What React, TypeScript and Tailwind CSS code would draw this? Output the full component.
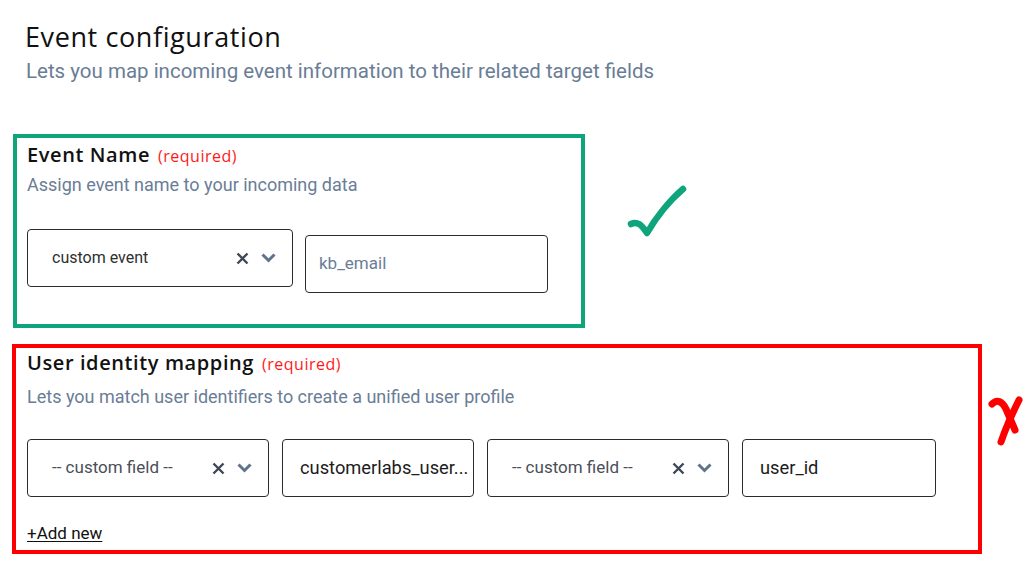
import React from "react";

function XIcon() {
  return (
    <svg width="13" height="13" viewBox="0 0 13 13" fill="none">
      <path d="M1.5 1.5 L11.5 11.5 M11.5 1.5 L1.5 11.5" stroke="#3f4756" strokeWidth="2.4" strokeLinecap="butt" />
    </svg>
  );
}

function Chevron() {
  return (
    <svg width="15" height="10" viewBox="0 0 15 10" fill="none">
      <path d="M1.5 1.5 L7.5 7.5 L13.5 1.5" stroke="#5f738c" strokeWidth="3" strokeLinejoin="miter" />
    </svg>
  );
}

function Select({ label, w, textCls }: { label: string; w: string; textCls: string }) {
  return (
    <div
      className={`${w} h-[58px] shrink-0 border-[1.5px] border-[#2b2b2b] rounded-[4px] flex items-center pl-[24px] pr-[16px] bg-white font-[Roboto,'Liberation_Sans',sans-serif]`}
    >
      <span className={`flex-1 whitespace-nowrap ${textCls}`}>{label}</span>
      <div className="flex items-center gap-[12px]">
        <XIcon />
        <Chevron />
      </div>
    </div>
  );
}

function Input({ value, w, placeholder, extra }: { value: string; w: string; placeholder?: boolean; extra?: string }) {
  return (
    <div
      className={`${w} h-[58px] shrink-0 border-[1.5px] border-[#2b2b2b] rounded-[4px] flex items-center bg-white font-[Roboto,'Liberation_Sans',sans-serif] ${extra ?? ""}`}
    >
      <span
        className={
          placeholder
            ? "pl-[13px] text-[17px] text-[#6a7d96]"
            : "pl-[17px] text-[18.3px] text-[#1c1c1c] whitespace-nowrap"
        }
      >
        {value}
      </span>
    </div>
  );
}

function Heading({ title }: { title: string }) {
  return (
    <div className="flex items-baseline gap-[8px] font-['Open_Sans',sans-serif]">
      <span className="text-[20px] leading-[24px] font-semibold text-[#111] tracking-[0.6px]">{title}</span>
      <span className="text-[16px] text-[#ff1a1a] tracking-[0.5px]">(required)</span>
    </div>
  );
}

export default function App() {
  return (
    <div className="w-[1024px] h-[574px] bg-white overflow-hidden pl-[12px] pt-[21px]">
      <h1 className="ml-[13px] text-[27px] leading-[32px] text-[#111] font-normal tracking-[0.6px] font-['Open_Sans',sans-serif]">
        Event configuration
      </h1>
      <p className="ml-[14px] mt-[6px] text-[20.5px] leading-[24px] text-[#6a7d96] font-[Roboto,'Liberation_Sans',sans-serif]">
        Lets you map incoming event information to their related target fields
      </p>

      <div className="flex items-start mt-[51px]">
        <div className="ml-[1px] w-[572px] h-[194px] shrink-0 border-[4px] border-[#0ea57d] pl-[10px] pt-[5px]">
          <Heading title="Event Name" />
          <p className="mt-[6px] text-[18px] leading-[22px] text-[#6a7d96] font-[Roboto,'Liberation_Sans',sans-serif]">
            Assign event name to your incoming data
          </p>
          <div className="flex items-start gap-[12px] mt-[33px]">
            <Select label="custom event" w="w-[266px]" textCls="text-[16px] text-[#2f2f2f]" />
            <Input value="kb_email" w="w-[243px]" placeholder extra="mt-[6px]" />
          </div>
        </div>
        <svg className="ml-[40px] mt-[49px] shrink-0" width="66" height="60" viewBox="0 0 66 60" fill="none">
          <path d="M6 41 C12 38 16 41 22 50 C30 36 44 18 58 6" stroke="#0ea57d" strokeWidth="6.5" strokeLinecap="round" strokeLinejoin="round" />
        </svg>
      </div>

      <div className="flex items-start mt-[16px]">
        <div className="w-[970px] h-[210px] shrink-0 border-[4px] border-[#ff0000] pl-[11px] pt-[3px]">
          <Heading title="User identity mapping" />
          <p className="mt-[10px] text-[18px] leading-[22px] text-[#6a7d96] font-[Roboto,'Liberation_Sans',sans-serif]">
            Lets you match user identifiers to create a unified user profile
          </p>
          <div className="flex items-start gap-[13px] mt-[31px]">
            <Select label="-- custom field --" w="w-[242px]" textCls="text-[17px] text-[#4a4f57]" />
            <Input value="customerlabs_user..." w="w-[192px]" />
            <Select label="-- custom field --" w="w-[242px]" textCls="text-[17px] text-[#4a4f57]" />
            <Input value="user_id" w="w-[194px]" />
          </div>
          <div className="mt-[25px] text-[17px] leading-[22px] text-[#111] underline underline-offset-2 font-[Roboto,'Liberation_Sans',sans-serif]">
            +Add new
          </div>
        </div>
        <svg className="ml-[6px] mt-[51px] shrink-0" width="36" height="52" viewBox="0 0 36 52" fill="none">
          <path d="M4 9 C9 4 14 6 18 14 L27 35" stroke="#ff0000" strokeWidth="7" strokeLinecap="round" strokeLinejoin="round" />
          <path d="M31 5 C25 17 18 32 13 47" stroke="#ff0000" strokeWidth="7" strokeLinecap="round" />
        </svg>
      </div>
    </div>
  );
}
